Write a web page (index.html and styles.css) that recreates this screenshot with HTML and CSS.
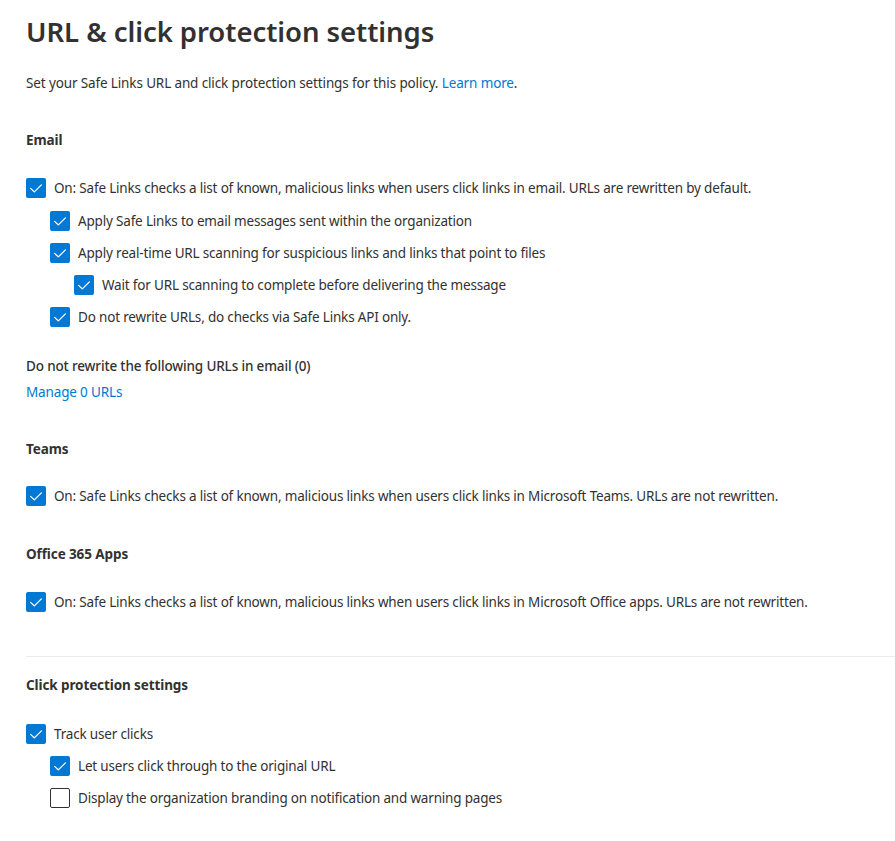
FILE: index.html
```html
<!DOCTYPE html>
<html>
<head>
<meta charset="utf-8">
<link rel="stylesheet" href="styles.css">
</head>
<body>
<div class="page">
  <h1 class="title">URL &amp; click protection settings</h1>
  <p class="desc">Set your Safe Links URL and click protection settings for this policy. <a class="link" href="#">Learn more</a>.</p>

  <h2 class="heading h-email">Email</h2>
  <div class="checks c-email">
    <div class="row"><span class="cb on"><svg viewBox="0 0 20 20"><path d="M4.6 10.4 L8.3 13.9 L15.4 6.9"/></svg></span><span class="lbl">On: Safe Links checks a list of known, malicious links when users click links in email. URLs are rewritten by default.</span></div>
    <div class="row l1 first"><span class="cb on"><svg viewBox="0 0 20 20"><path d="M4.6 10.4 L8.3 13.9 L15.4 6.9"/></svg></span><span class="lbl">Apply Safe Links to email messages sent within the organization</span></div>
    <div class="row l1"><span class="cb on"><svg viewBox="0 0 20 20"><path d="M4.6 10.4 L8.3 13.9 L15.4 6.9"/></svg></span><span class="lbl">Apply real-time URL scanning for suspicious links and links that point to files</span></div>
    <div class="row l2"><span class="cb on"><svg viewBox="0 0 20 20"><path d="M4.6 10.4 L8.3 13.9 L15.4 6.9"/></svg></span><span class="lbl">Wait for URL scanning to complete before delivering the message</span></div>
    <div class="row l1"><span class="cb on"><svg viewBox="0 0 20 20"><path d="M4.6 10.4 L8.3 13.9 L15.4 6.9"/></svg></span><span class="lbl">Do not rewrite URLs, do checks via Safe Links API only.</span></div>
  </div>

  <div class="sublabel">Do not rewrite the following URLs in email (0)</div>
  <a class="link manage" href="#">Manage 0 URLs</a>

  <h2 class="heading h-teams">Teams</h2>
  <div class="checks c-teams">
    <div class="row"><span class="cb on"><svg viewBox="0 0 20 20"><path d="M4.6 10.4 L8.3 13.9 L15.4 6.9"/></svg></span><span class="lbl">On: Safe Links checks a list of known, malicious links when users click links in Microsoft Teams. URLs are not rewritten.</span></div>
  </div>

  <h2 class="heading h-office">Office 365 Apps</h2>
  <div class="checks c-office">
    <div class="row"><span class="cb on"><svg viewBox="0 0 20 20"><path d="M4.6 10.4 L8.3 13.9 L15.4 6.9"/></svg></span><span class="lbl">On: Safe Links checks a list of known, malicious links when users click links in Microsoft Office apps. URLs are not rewritten.</span></div>
  </div>

  <hr class="divider">

  <h2 class="heading h-click">Click protection settings</h2>
  <div class="checks c-click">
    <div class="row"><span class="cb on"><svg viewBox="0 0 20 20"><path d="M4.6 10.4 L8.3 13.9 L15.4 6.9"/></svg></span><span class="lbl">Track user clicks</span></div>
    <div class="row l1"><span class="cb on"><svg viewBox="0 0 20 20"><path d="M4.6 10.4 L8.3 13.9 L15.4 6.9"/></svg></span><span class="lbl">Let users click through to the original URL</span></div>
    <div class="row l1"><span class="cb off"></span><span class="lbl">Display the organization branding on notification and warning pages</span></div>
  </div>
</div>
</body>
</html>
```

FILE: styles.css
```css
* { box-sizing: border-box; }
html, body { margin: 0; padding: 0; background: #ffffff; }
body {
  font-family: "Noto Sans", "Open Sans", "Liberation Sans", sans-serif;
  font-size: 14px;
  color: #323130;
}
.page {
  padding: 14px 0 40px 26px;
}
.title {
  margin: 0;
  font-size: 27.5px;
  line-height: 36px;
  font-weight: 600;
  color: #323130;
  letter-spacing: -0.05px;
}
.desc {
  margin: 23px 0 0;
  line-height: 20px;
  font-size: 13.5px;
  letter-spacing: -0.13px;
}
.link { color: #0078d4; text-decoration: none; }
.heading {
  margin: 0;
  font-size: 13.5px;
  line-height: 20px;
  font-weight: 700;
  letter-spacing: -0.1px;
}
.h-email { margin-top: 37px; }
.h-teams { margin-top: 37px; }
.h-office { margin-top: 38px; }
.h-click { margin-top: 18px; }
.checks {
  margin-top: 27px;
  display: flex;
  flex-direction: column;
  gap: 12px;
}
.c-email { margin-top: 28px; }
.c-teams { margin-top: 27px; }
.c-office { margin-top: 28px; }
.c-click { margin-top: 29px; }
.row {
  display: flex;
  align-items: center;
  gap: 8px;
  height: 20px;
  line-height: 20px;
  font-size: 13.5px;
  letter-spacing: -0.18px;
  white-space: nowrap;
}
.row.first { margin-top: 1px; }
.row.l1 { padding-left: 24px; }
.row.l2 { padding-left: 48px; }
.cb {
  width: 20px;
  height: 20px;
  flex: none;
  border-radius: 2px;
  display: inline-flex;
}
.cb.on { background: #0078d4; }
.cb.off { border: 1px solid #323130; background: #fff; }
.cb svg { width: 20px; height: 20px; }
.cb svg path { fill: none; stroke: #ffffff; stroke-width: 1.3; stroke-linecap: round; stroke-linejoin: round; }
.sublabel {
  margin-top: 29px;
  line-height: 20px;
  font-size: 13.5px;
  font-weight: 500;
  letter-spacing: -0.15px;
}
.manage {
  display: block;
  margin-top: 6px;
  line-height: 20px;
  font-size: 13.5px;
  letter-spacing: -0.15px;
}
.divider {
  margin: 44px 0 0;
  border: 0;
  border-top: 1px solid #edebe9;
  height: 0;
}
```
